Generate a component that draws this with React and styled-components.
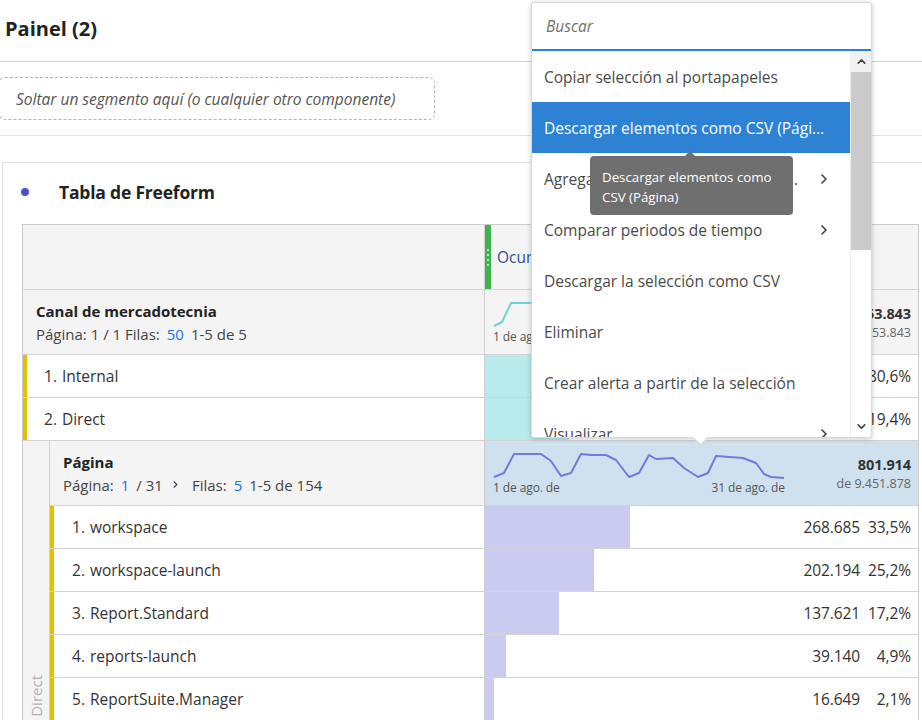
import React from "react";
import styled, { createGlobalStyle } from "styled-components";
import { ChevronRight, ChevronUp, ChevronDown } from "lucide-react";

const GlobalStyle = createGlobalStyle`
    body {
        margin: 0;
        background: #ffffff;
        font-family: "Open Sans", Lato, sans-serif;
        color: #2c2c2c;
        overflow: hidden;
    }
`;

const Page = styled.div`
    position: relative;
    width: 922px;
    height: 720px;
    overflow: hidden;
`;

const TitleBar = styled.div`
    height: 56px;
    display: flex;
    align-items: center;
    padding: 0 0 5px 5px;
    font-size: 20px;
    font-weight: 700;
    color: #222;
    border-bottom: 1px solid #cfcfcf;
`;

const DropRow = styled.div`
    height: 58px;
    padding-top: 15px;
    border-bottom: 1px solid #e4e4e4;
`;

const DropZone = styled.div`
    margin-left: -1px;
    width: 436px;
    height: 43px;
    border: 1px dashed #b4b4b4;
    border-radius: 6px;
    display: flex;
    align-items: center;
    padding-left: 16px;
    box-sizing: border-box;
    font-style: italic;
    font-size: 15.5px;
    color: #555;
    white-space: nowrap;
`;

const Panel = styled.div`
    margin: 26px -30px 0 2px;
    border: 1px solid #e0e0e0;
    border-bottom: none;
    height: 600px;
`;

const PanelHeader = styled.div`
    height: 61px;
    box-sizing: border-box;
    display: flex;
    align-items: center;
    padding: 0 0 4px 18px;
    gap: 30px;
    font-size: 17.5px;
    font-weight: 700;
    color: #222;
    letter-spacing: -0.2px;
`;

const Dot = styled.span`
    width: 8px;
    height: 8px;
    border-radius: 50%;
    background: #5050d2;
`;

const Table = styled.div`
    margin-left: 19px;
    width: 897px;
    border: 1px solid #cccccc;
    border-bottom: none;
    box-sizing: border-box;
`;

const Row = styled.div`
    display: grid;
    grid-template-columns: 1fr 433px;
    height: ${(p) => p.$h}px;
    border-bottom: 1px solid #d3d3d3;
    background: ${(p) => (p.$head ? "#f4f4f4" : "#ffffff")};
`;

const LeftCell = styled.div`
    border-right: 1px solid #d0d0d0;
    border-left: ${(p) => (p.$accent ? "4px solid #e4c100" : "none")};
    padding-left: ${(p) => p.$pad}px;
    display: flex;
    flex-direction: ${(p) => (p.$stack ? "column" : "row")};
    justify-content: ${(p) => (p.$stack ? "center" : "flex-start")};
    align-items: ${(p) => (p.$stack ? "flex-start" : "center")};
    font-size: 15.5px;
    color: #333;
`;

const RowTitle = styled.div`
    font-weight: 700;
    font-size: 15px;
    color: #222;
    margin-bottom: 3px;
`;

const Pager = styled.div`
    font-size: 15px;
    color: #444;
    display: flex;
    align-items: center;
    gap: 3px;
    white-space: nowrap;
`;

const Blue = styled.span`
    color: #1473e6;
    margin: 0 4px;
`;

const Num = styled.span`
    margin-right: 5px;
`;

const HeaderMetric = styled.div`
    display: flex;
    align-items: center;
    gap: 6px;
    font-size: 15.5px;
    color: #2f4f86;
`;

const Handle = styled.div`
    width: 6px;
    align-self: stretch;
    background: #3db54a;
    display: flex;
    flex-direction: column;
    justify-content: center;
    align-items: center;
    gap: 3px;
    & > i {
        width: 2px;
        height: 2px;
        border-radius: 50%;
        background: #e9f7ea;
    }
`;

const ChartCell = styled.div`
    display: flex;
    justify-content: space-between;
    padding: 0 7px 0 8px;
    background: ${(p) => p.$bg || "transparent"};
`;

const Spark = styled.div`
    width: 292px;
    padding-top: 10px;
    display: flex;
    flex-direction: column;
`;

const SparkLabels = styled.div`
    display: flex;
    justify-content: space-between;
    font-size: 12px;
    color: #555;
    letter-spacing: -0.1px;
`;

const Totals = styled.div`
    display: flex;
    flex-direction: column;
    align-items: flex-end;
    justify-content: center;
    gap: 1px;
    & > b {
        font-size: 14.5px;
        color: #333;
        letter-spacing: -0.1px;
    }
    & > span {
        font-size: 12.5px;
        color: #666;
    }
`;

const BarCell = styled.div`
    display: flex;
    justify-content: flex-end;
    align-items: center;
    gap: 8px;
    padding-right: 7px;
    font-size: 15.5px;
    color: #333;
    letter-spacing: -0.1px;
    background-image: linear-gradient(${(p) => p.$color}, ${(p) => p.$color});
    background-repeat: no-repeat;
`;

const Pct = styled.span`
    min-width: 43px;
    text-align: right;
`;

const Nested = styled.div`
    display: grid;
    grid-template-columns: 27px 1fr;
`;

const Gutter = styled.div`
    background: #f4f4f4;
    border-right: 1px solid #d0d0d0;
    display: flex;
    align-items: flex-end;
    justify-content: center;
    padding-bottom: 4px;
    span {
        writing-mode: vertical-rl;
        transform: rotate(180deg);
        font-size: 15px;
        color: #b3b3b3;
    }
`;

const Menu = styled.div`
    position: absolute;
    left: 531px;
    top: 2px;
    width: 341px;
    height: 436px;
    background: #fff;
    border: 1px solid #dadada;
    box-sizing: border-box;
    box-shadow: 0 1px 5px rgba(0, 0, 0, 0.22);
    border-radius: 3px;
    display: flex;
    flex-direction: column;
`;

const Search = styled.div`
    height: 46px;
    flex: none;
    display: flex;
    align-items: center;
    padding-left: 14px;
    font-style: italic;
    font-size: 15.5px;
    color: #6e6e6e;
    border-bottom: 2px solid #2680eb;
`;

const MenuBody = styled.div`
    flex: 1;
    display: flex;
    overflow: hidden;
`;

const Items = styled.div`
    flex: 1;
    min-width: 0;
`;

const Item = styled.div`
    height: 51px;
    display: flex;
    align-items: center;
    gap: 12px;
    padding: 0 18px 0 12px;
    font-size: 15.5px;
    color: ${(p) => (p.$active ? "#ffffff" : "#4a4a4a")};
    background: ${(p) => (p.$active ? "#2e82d4" : "transparent")};
    svg {
        flex: none;
        color: #444;
    }
`;

const Label = styled.span`
    flex: 1;
    white-space: nowrap;
    overflow: hidden;
    text-overflow: ellipsis;
`;

const Scroll = styled.div`
    width: 20px;
    flex: none;
    display: flex;
    flex-direction: column;
    border-left: 1px solid #efefef;
`;

const ScrollBtn = styled.div`
    height: 21px;
    flex: none;
    display: flex;
    align-items: center;
    justify-content: center;
    background: ${(p) => p.$bg || "transparent"};
    color: #444;
`;

const Thumb = styled.div`
    height: 178px;
    background: #cbcbcb;
`;

const Track = styled.div`
    flex: 1;
`;

const Tip = styled.div`
    position: absolute;
    left: 163px;
    bottom: -6px;
    width: 10px;
    height: 10px;
    background: #fff;
    border-right: 1px solid #d6d6d6;
    border-bottom: 1px solid #d6d6d6;
    transform: rotate(45deg);
`;

const Tooltip = styled.div`
    position: absolute;
    left: 590px;
    top: 156px;
    width: 203px;
    height: 59px;
    box-sizing: border-box;
    padding: 11px 12px 0;
    background: #6f6f6f;
    border-radius: 4px;
    color: #fff;
    font-size: 13.3px;
    line-height: 20px;
    &::before {
        content: "";
        position: absolute;
        left: 94px;
        top: -5px;
        border-left: 6px solid transparent;
        border-right: 6px solid transparent;
        border-bottom: 6px solid #6f6f6f;
    }
`;

const purplePts = [
    [0, 25], [10, 21], [20, 2], [47, 2], [57, 9], [67, 24], [77, 21], [87, 2], [97, 3],
    [112, 3], [122, 8], [135, 25], [145, 21], [155, 3], [162, 7], [179, 6], [190, 16],
    [204, 25], [214, 21], [222, 4], [249, 6], [262, 11], [270, 22], [277, 25], [290, 26],
];

const tealPts = [
    [0, 25], [8, 21], [17, 2], [40, 2], [50, 8], [62, 24], [72, 21], [82, 3], [110, 4],
    [122, 10], [134, 25], [144, 21], [154, 3], [180, 5], [192, 14], [204, 25], [214, 21],
    [222, 4], [250, 6], [262, 12], [272, 23], [290, 25],
];

function Sparkline({ pts, color }) {
    return (
        <svg width="292" height="28" viewBox="-1 -1 292 28">
            <polyline
                points={pts.map((p) => p.join(",")).join(" ")}
                fill="none"
                stroke={color}
                strokeWidth="2"
                strokeLinejoin="round"
            />
        </svg>
    );
}

const topRows = [
    { n: 1, name: "Internal", value: "2.007.320", pct: 80.6 },
    { n: 2, name: "Direct", value: "483.152", pct: 19.4 },
];

const pageRows = [
    { n: 1, name: "workspace", value: "268.685", pct: 33.5 },
    { n: 2, name: "workspace-launch", value: "202.194", pct: 25.2 },
    { n: 3, name: "Report.Standard", value: "137.621", pct: 17.2 },
    { n: 4, name: "reports-launch", value: "39.140", pct: 4.9 },
    { n: 5, name: "ReportSuite.Manager", value: "16.649", pct: 2.1 },
];

const menuItems = [
    { label: "Copiar selección al portapapeles" },
    { label: "Descargar elementos como CSV (Página)", active: true },
    { label: "Agregar desglose de tiempo a la selección", sub: true },
    { label: "Comparar periodos de tiempo", sub: true },
    { label: "Descargar la selección como CSV" },
    { label: "Eliminar" },
    { label: "Crear alerta a partir de la selección" },
    { label: "Visualizar", sub: true },
];

const fmtPct = (v) => v.toFixed(1).replace(".", ",") + "%";

function App() {
    return (
        <Page>
            <GlobalStyle />
            <TitleBar>Painel (2)</TitleBar>
            <DropRow>
                <DropZone>Soltar un segmento aquí (o cualquier otro componente)</DropZone>
            </DropRow>

            <Panel>
                <PanelHeader>
                    <Dot />
                    Tabla de Freeform
                </PanelHeader>
                <Table>
                    <Row $h={64} $head>
                        <LeftCell />
                        <HeaderMetric>
                            <Handle>
                                <i /><i /><i /><i />
                            </Handle>
                            Ocurrencias
                        </HeaderMetric>
                    </Row>

                    <Row $h={64} $head>
                        <LeftCell $pad={13} $stack>
                            <RowTitle>Canal de mercadotecnia</RowTitle>
                            <Pager>
                                Página: 1 / 1 Filas: <Blue>50</Blue> 1-5 de 5
                            </Pager>
                        </LeftCell>
                        <ChartCell>
                            <Spark>
                                <Sparkline pts={tealPts} color="#6fd3d6" />
                                <SparkLabels>
                                    <span>1 de ago. de</span>
                                    <span>31 de ago. de</span>
                                </SparkLabels>
                            </Spark>
                            <Totals>
                                <b>9.453.843</b>
                                <span>de 9.453.843</span>
                            </Totals>
                        </ChartCell>
                    </Row>

                    {topRows.map((r) => (
                        <Row $h={42} key={r.n}>
                            <LeftCell $accent $pad={17}>
                                <Num>{r.n}.</Num>
                                {r.name}
                            </LeftCell>
                            <BarCell $color="#b8ebeb" style={{ backgroundSize: `${r.pct}% 100%` }}>
                                <span>{r.value}</span>
                                <Pct>{fmtPct(r.pct)}</Pct>
                            </BarCell>
                        </Row>
                    ))}

                    <Nested>
                        <Gutter>
                            <span>Direct</span>
                        </Gutter>
                        <div>
                            <Row $h={64} $head>
                                <LeftCell $pad={13} $stack>
                                    <RowTitle>Página</RowTitle>
                                    <Pager>
                                        Página: <Blue>1</Blue>/ 31
                                        <ChevronRight size={11} strokeWidth={2.5} style={{ margin: "0 8px 0 4px" }} />
                                        Filas: <Blue>5</Blue> 1-5 de 154
                                    </Pager>
                                </LeftCell>
                                <ChartCell $bg="#cfe0ee">
                                    <Spark>
                                        <Sparkline pts={purplePts} color="#7878dc" />
                                        <SparkLabels>
                                            <span>1 de ago. de</span>
                                            <span>31 de ago. de</span>
                                        </SparkLabels>
                                    </Spark>
                                    <Totals>
                                        <b>801.914</b>
                                        <span>de 9.451.878</span>
                                    </Totals>
                                </ChartCell>
                            </Row>
                            {pageRows.map((r) => (
                                <Row $h={42} key={r.n}>
                                    <LeftCell $accent $pad={18}>
                                        <Num>{r.n}.</Num>
                                        {r.name}
                                    </LeftCell>
                                    <BarCell $color="#cbcbf1" style={{ backgroundSize: `${r.pct}% 100%` }}>
                                        <span>{r.value}</span>
                                        <Pct>{fmtPct(r.pct)}</Pct>
                                    </BarCell>
                                </Row>
                            ))}
                        </div>
                    </Nested>
                </Table>
            </Panel>

            <Menu>
                <Search>Buscar</Search>
                <MenuBody>
                    <Items>
                        {menuItems.map((m) => (
                            <Item key={m.label} $active={m.active}>
                                <Label>{m.label}</Label>
                                {m.sub && <ChevronRight size={16} strokeWidth={2.5} />}
                            </Item>
                        ))}
                    </Items>
                    <Scroll>
                        <ScrollBtn $bg="#f1f1f1">
                            <ChevronUp size={13} strokeWidth={3} />
                        </ScrollBtn>
                        <Thumb />
                        <Track />
                        <ScrollBtn>
                            <ChevronDown size={13} strokeWidth={3} />
                        </ScrollBtn>
                    </Scroll>
                </MenuBody>
                <Tip />
            </Menu>

            <Tooltip>Descargar elementos como CSV (Página)</Tooltip>
        </Page>
    );
}

export default App;
